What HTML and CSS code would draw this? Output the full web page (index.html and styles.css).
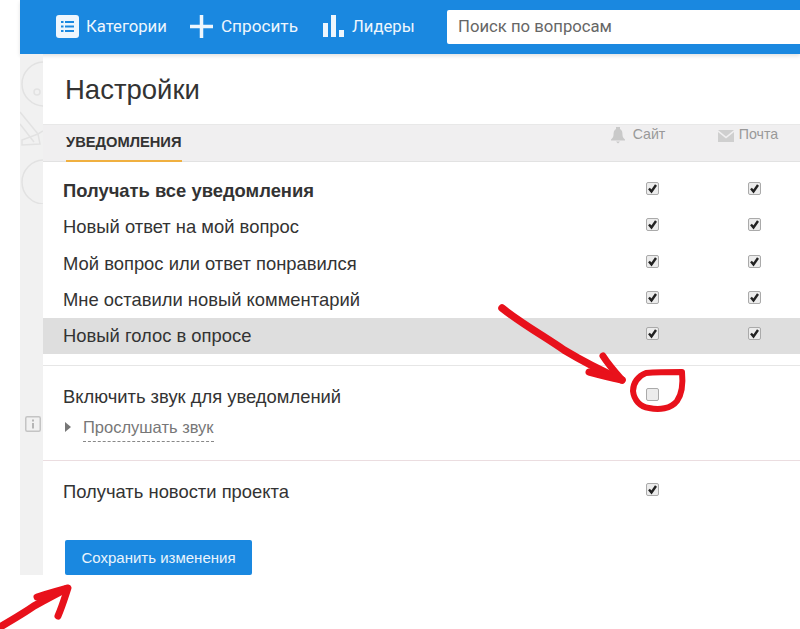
FILE: index.html
```html
<!DOCTYPE html>
<html lang="ru">
<head>
    <meta charset="UTF-8">
    <meta name="viewport" content="width=device-width, initial-scale=1.0">
    <title>Настройки</title>
    <link rel="stylesheet" href="styles.css">
</head>
<body>
    <div class="shell">
        <header class="topbar">
            <nav class="nav">
                <a class="nav-item nav-cat">
                    <svg width="23" height="23" viewBox="0 0 23 23"><rect width="23" height="23" rx="3" fill="#eef6fd"/><path d="M5 7h2.500M9 7h9M5 11.500h2.500M9 11.500h9M5 16h2.500M9 16h9" stroke="#1a88e0" stroke-width="2.200"/></svg>
                    Категории
                </a>
                <a class="nav-item nav-ask">
                    <svg width="23" height="23" viewBox="0 0 23 23"><path d="M11.500 0v23M0 11.500h23" stroke="#eef6fd" stroke-width="3.500"/></svg>
                    Спросить
                </a>
                <a class="nav-item nav-lead">
                    <svg width="23" height="24" viewBox="0 0 23 24"><path d="M1 9h5v14H1zM9 1h5v22H9zM17 16h5v7h-5z" fill="#eef6fd"/></svg>
                    Лидеры
                </a>
            </nav>
            <input class="search" type="text" placeholder="Поиск по вопросам">
        </header>
        <div class="content">
            <aside class="rail">
                <svg class="rail-art" width="23" height="150" viewBox="0 0 23 150" fill="none" stroke="#e2e2e2" stroke-width="1.500">
                    <circle cx="24" cy="30" r="22"/>
                    <circle cx="17" cy="38" r="3"/>
                    <path d="M0 58l18 22 5-3M2 86l16-6 2 10-18 1zM0 70l14 18"/>
                    <circle cx="24" cy="128" r="22"/>
                </svg>
                <svg class="rail-info" width="16" height="16" viewBox="0 0 16 16" fill="none"><rect x=".75" y=".75" width="14.500" height="14.500" rx="1.500" stroke="#c4c4c4" stroke-width="1.500"/><path d="M8 3.500v2M8 7v5.500" stroke="#b5b5b5" stroke-width="2"/></svg>
            </aside>
            <main class="panel">
                <h1 class="title">Настройки</h1>
                <div class="tabs">
                    <span class="tab">УВЕДОМЛЕНИЯ</span>
                    <span class="channel channel-site">
                        <svg width="14" height="18" viewBox="0 0 14 18"><path d="M5 1h4v2c2 1 2.500 3 2.500 6 0 2 1 3 2.500 4.500v1H0v-1C1.500 12 2.500 11 2.500 9c0-3 .5-5 2.500-6zM5 15.500h4L7 17.500z" fill="#c9c9c9"/></svg>
                        Сайт
                    </span>
                    <span class="channel channel-mail">
                        <svg width="16" height="12" viewBox="0 0 16 12"><path d="M0 0h16L8 6.500zM0 2l8 6.500L16 2v10H0z" fill="#cfcfcf"/></svg>
                        Почта
                    </span>
                </div>

                <div class="rows">
                    <div class="row row-bold"><span>Получать все уведомления</span><input class="check" type="checkbox" checked><input class="check" type="checkbox" checked></div>
                    <div class="row"><span>Новый ответ на мой вопрос</span><input class="check" type="checkbox" checked><input class="check" type="checkbox" checked></div>
                    <div class="row"><span>Мой вопрос или ответ понравился</span><input class="check" type="checkbox" checked><input class="check" type="checkbox" checked></div>
                    <div class="row"><span>Мне оставили новый комментарий</span><input class="check" type="checkbox" checked><input class="check" type="checkbox" checked></div>
                    <div class="row row-active"><span>Новый голос в опросе</span><input class="check" type="checkbox" checked><input class="check" type="checkbox" checked></div>
                </div>

                <section class="sound">
                    <div class="row"><span>Включить звук для уведомлений</span><input class="check" type="checkbox"></div>
                    <div class="listen"><a class="listen-link">Прослушать звук</a></div>
                </section>

                <section class="news">
                    <div class="row"><span>Получать новости проекта</span><input class="check" type="checkbox" checked></div>
                </section>

                <button class="save">Сохранить изменения</button>
            </main>
        </div>
    </div>

    <!-- red marks drawn over the screenshot -->
    <svg class="marks" width="800" height="629" viewBox="0 0 800 629" fill="none" stroke="#e8111b" stroke-linecap="round" stroke-linejoin="round">
        <path d="M502 308c20 16 45 30 62 42 20 12 40 22 58 30" stroke-width="7.500"/>
        <path d="M603 356c5 8 12 16 19 24-10-2-22-5-33-8" stroke-width="7"/>
        <path d="M646 373c12-1 24-1 36-1 1 10 0 22-5 29-6 8-18 9-28 7-9-1-15-8-16-17 0-8 5-15 13-18z" stroke-width="6"/>
        <path d="M0 627c12-7 24-14 34-21 11-6 22-12 32-17" stroke-width="7.500"/>
        <path d="M37 597c10-3 20-6 31-9-3 9-6 19-10 28" stroke-width="7"/>
    </svg>
</body>
</html>
```

FILE: styles.css
```css
body {
    margin: 0;
    height: 629px;
    overflow: hidden;
    background-color: #fff;
    font-family: "Liberation Sans", Arial, sans-serif;
    color: #333;
    position: relative;
}
.shell {
    margin-left: 20px;
}
.topbar {
    height: 54px;
    background-color: #1a88e0;
    display: flex;
    align-items: center;
    justify-content: space-between;
    box-shadow: 0 2px 4px rgba(0, 0, 0, 0.12);
    position: relative;
}
.nav {
    display: flex;
    align-items: center;
    padding-left: 36px;
    margin-top: -2px;
}
.nav-item {
    display: flex;
    align-items: center;
    color: #eef6fd;
    font-family: Roboto, sans-serif;
    font-size: 16.7px;
}
.nav-cat svg {
    margin-right: 7px;
}
.nav-ask {
    margin-left: 23px;
    font-size: 17.2px;
}
.nav-ask svg {
    margin-right: 8px;
}
.nav-lead {
    margin-left: 24px;
}
.nav-lead svg {
    margin-right: 7px;
}
.search {
    width: 353px;
    height: 34px;
    box-sizing: border-box;
    border: 0;
    padding: 0 11px 2px;
    border-radius: 2px 0 0 2px;
    background-color: #fff;
    font-family: Roboto, sans-serif;
    font-size: 16.7px;
}
.search::placeholder {
    color: #666;
    opacity: 1;
}
.content {
    display: flex;
    height: 521px;
}
.rail {
    width: 23px;
    background-color: #f1f1f1;
    position: relative;
    overflow: hidden;
}
.rail-art {
    display: block;
    margin-top: 0;
}
.rail-info {
    position: absolute;
    left: 5px;
    top: 362px;
}
.panel {
    flex-grow: 1;
}
.title {
    margin: 0;
    height: 70px;
    box-sizing: border-box;
    padding: 20px 0 0 22px;
    font-size: 27.5px;
    line-height: 32px;
    font-weight: normal;
    color: #333;
}
.tabs {
    height: 38px;
    box-sizing: border-box;
    background-color: #f0eff0;
    border-top: 1px solid #e8e8e8;
    border-bottom: 1px solid #e2e2e2;
    display: grid;
    grid-template-columns: 1fr 112px 92px;
    padding-left: 23px;
    color: #999;
    font-size: 14.2px;
}
.tab {
    justify-self: start;
    height: 37px;
    box-sizing: border-box;
    padding-top: 9px;
    border-bottom: 2px solid #f0b040;
    color: #333;
    font-size: 14.7px;
    font-weight: bold;
    line-height: 17px;
}
.channel {
    display: flex;
    align-items: flex-start;
    justify-content: center;
    line-height: 18px;
}
.channel-site {
    padding-right: 28px;
}
.channel-site svg {
    margin-right: 8px;
    margin-top: 1px;
}
.channel-mail {
    padding-right: 12px;
}
.channel-mail svg {
    margin-right: 5px;
    margin-top: 5px;
}
.rows {
    padding-top: 11px;
    padding-bottom: 11px;
    border-bottom: 1px solid #e6e6e6;
}
.row {
    display: grid;
    grid-template-columns: 1fr 112px 92px;
    align-items: center;
    height: 36.25px;
    padding-left: 20px;
    font-size: 18.4px;
    color: #333;
}
.row-bold {
    font-weight: bold;
}
.row-active {
    background-color: #dedede;
}
.check {
    appearance: none;
    justify-self: center;
    width: 13px;
    height: 13px;
    margin: -5px 0 0;
    box-sizing: border-box;
    border: 1px solid #aaa;
    border-radius: 2px;
    background-color: #ececec;
}
.check:checked {
    background-image: url("data:image/svg+xml,%3Csvg xmlns='http://www.w3.org/2000/svg' viewBox='0 0 11 11'%3E%3Cpath d='M2 5.500l2.500 3L9 2' fill='none' stroke='%23222' stroke-width='2.400'/%3E%3C/svg%3E");
    background-size: 11px 11px;
}
.sound {
    padding: 13px 0 18px;
    border-bottom: 1px solid #ebdde0;
}
.listen {
    margin-top: 1px;
    padding-left: 40px;
    position: relative;
    font-size: 16.5px;
    line-height: 20px;
}
.listen::before {
    content: "";
    position: absolute;
    left: 22px;
    top: 5px;
    border-left: 6px solid #777;
    border-top: 5px solid transparent;
    border-bottom: 5px solid transparent;
}
.listen-link {
    display: inline-block;
    color: #777;
    border-bottom: 1px dashed #888;
    padding-bottom: 4px;
}
.news {
    padding-top: 13px;
}
.save {
    display: block;
    margin: 30px 0 0 22px;
    width: 187px;
    height: 35px;
    border: 0;
    border-radius: 2px;
    background-color: #1a88e0;
    color: #eaf4fc;
    font-family: "Liberation Sans", Arial, sans-serif;
    font-size: 15px;
}
.marks {
    position: absolute;
    left: 0;
    top: 0;
    pointer-events: none;
}
```
